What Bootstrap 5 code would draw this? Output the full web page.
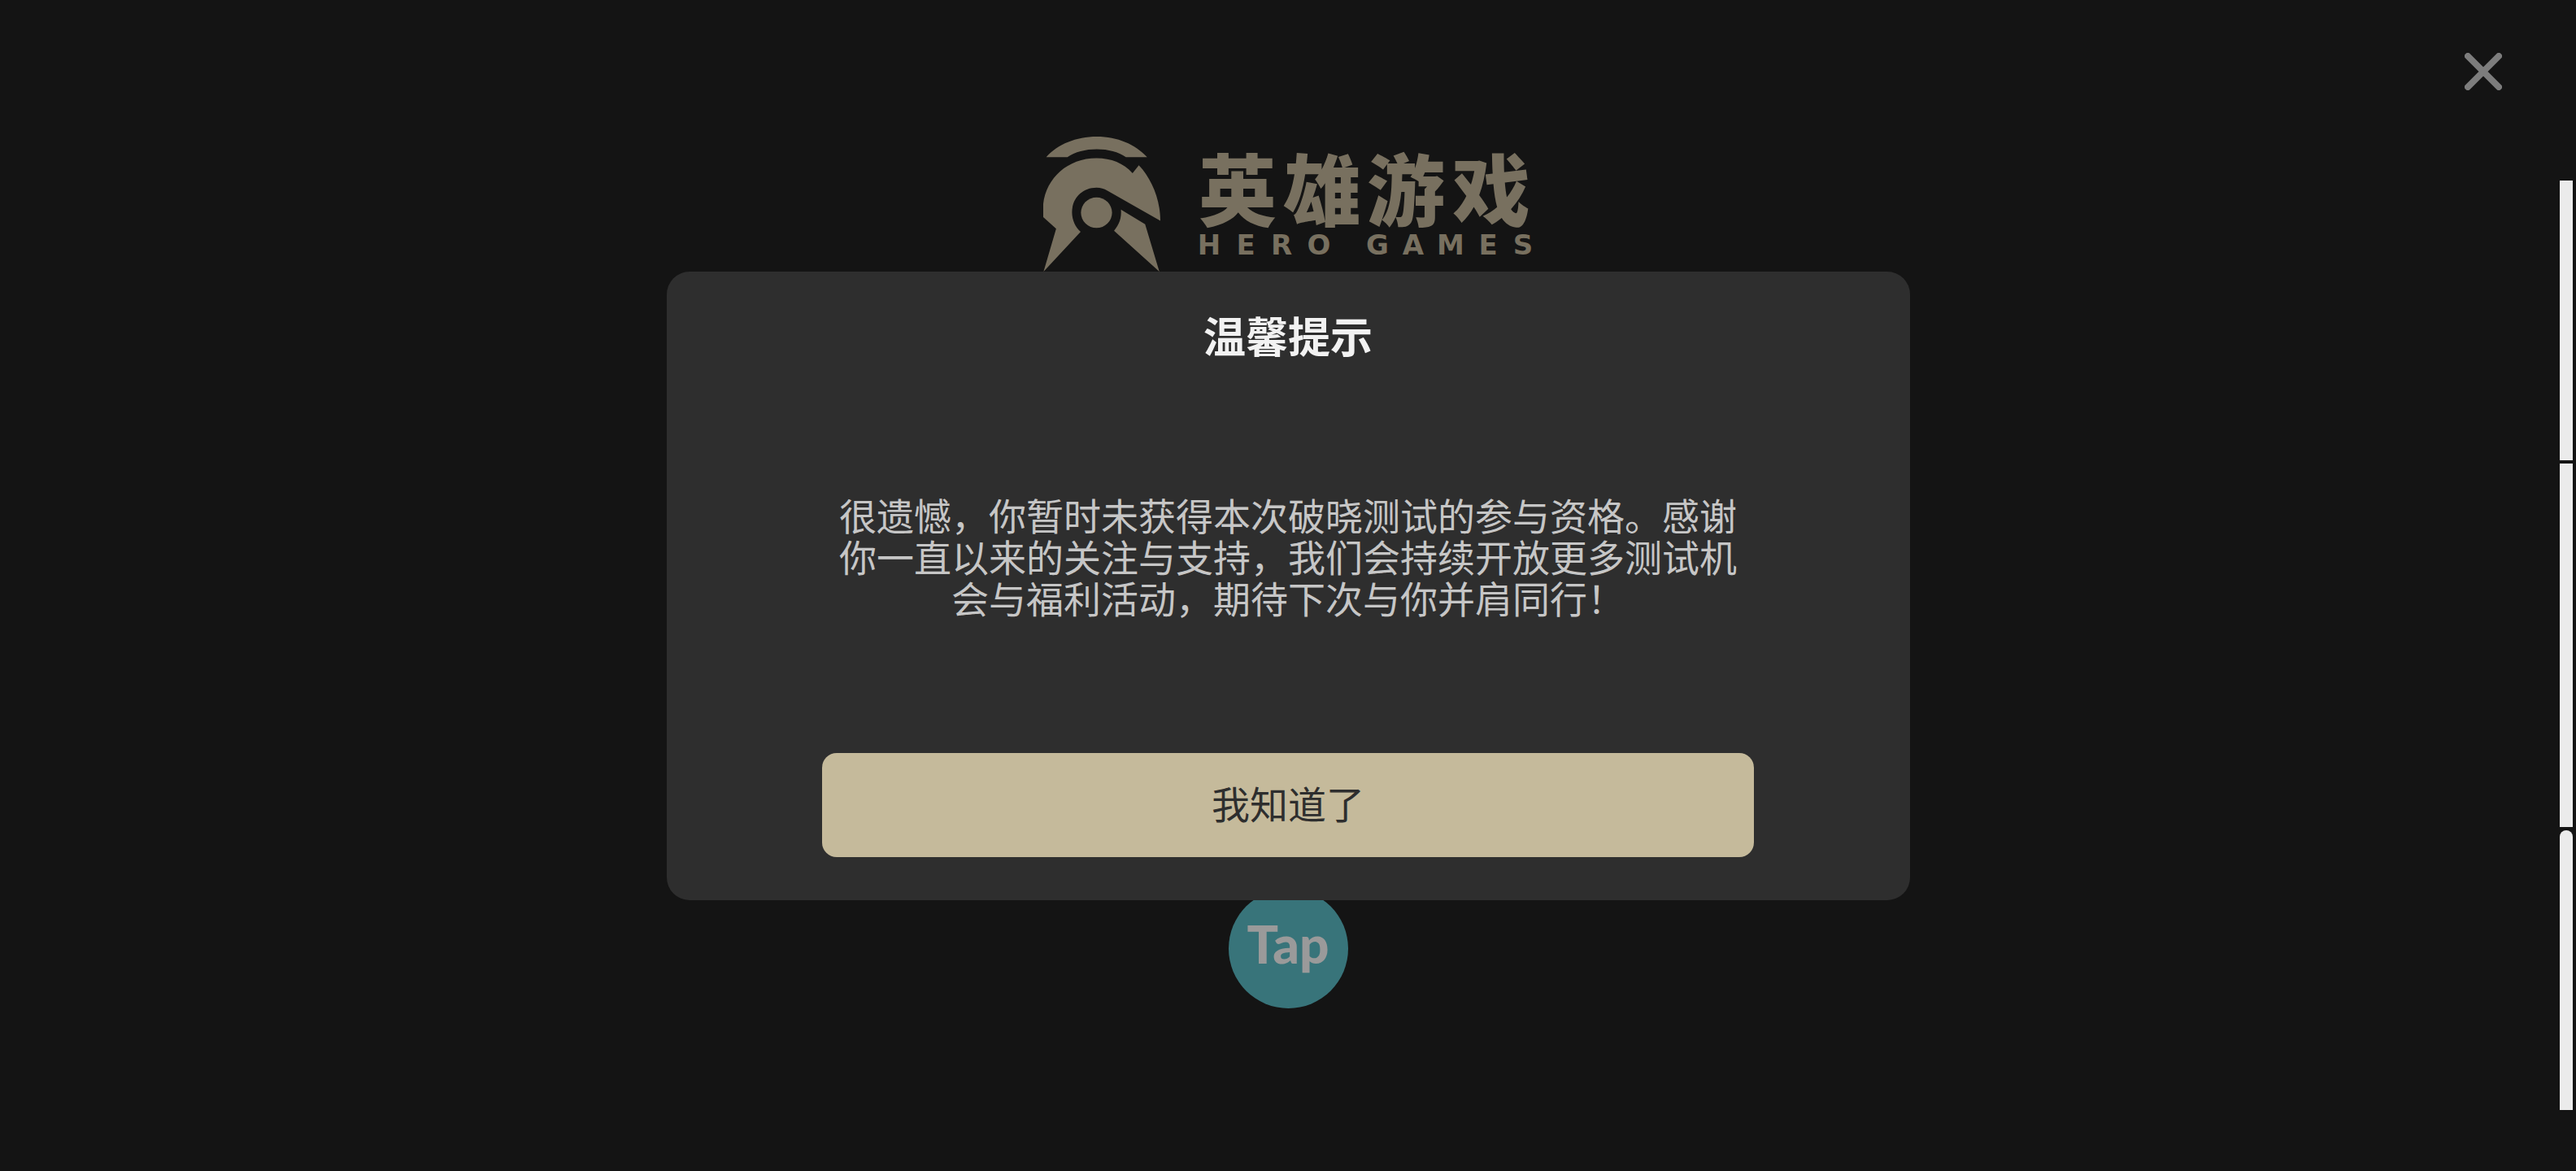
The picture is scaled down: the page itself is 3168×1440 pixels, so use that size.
<!DOCTYPE html>
<html lang="zh-CN">
<head>
<meta charset="utf-8">
<meta name="viewport" content="width=device-width, initial-scale=1">
<title>温馨提示</title>
<link href="https://cdn.jsdelivr.net/npm/bootstrap@5.3.0/dist/css/bootstrap.min.css" rel="stylesheet">
<style>
  body { background: #141414; font-family: "Noto Sans CJK SC", sans-serif; }
  .login-page { padding: 168px 24px 200px; }
  .brand-logo { width: 602px; max-width: 80%; fill: #78705f; overflow: visible; }
  .brand-zh { font: 900 96px "Noto Sans CJK SC", sans-serif; }
  .brand-en { font: 700 34px "DejaVu Sans", sans-serif; }
  .tap-login { width: 147px; border-radius: 50%; }
  .tap-login text { font: 900 64px Lato, sans-serif; }
  .page-close { top: 65px; right: 91px; width: 46px; height: 46px; }
  .notice-layer { z-index: 10; pointer-events: none; }
  .notice-box { width: 1529px; max-width: 94%; padding: 48px 24px 53px; background: #2e2e2e; border-radius: 28px; pointer-events: auto; }
  .notice-inner { width: 1146px; max-width: 100%; }
  .notice-title { font-size: 52px; line-height: 60px; color: #f2f2f2; }
  .notice-text { margin: 165px 0 166px; font-size: 46px; line-height: 51px; color: #c6c6c6; }
  .notice-ok, .notice-ok:hover { height: 128px; padding: 4px 12px 10px; border: 0; border-radius: 18px; background: #c5ba9b; color: #2e2e2e; font-size: 47px; line-height: 60px; }
  .side-rail { top: 222px; bottom: 75px; right: 4px; width: 16px; gap: 4px; }
  .rail-part { flex: 344 1 0; background: #ebebeb; }
  .rail-mid { flex-grow: 447; }
  .rail-last { border-radius: 8px 8px 0 0; }
</style>
<script src="https://cdn.jsdelivr.net/npm/bootstrap@5.3.0/dist/js/bootstrap.bundle.min.js"></script>
</head>
<body>
<main class="login-page d-flex flex-column align-items-center justify-content-between min-vh-100">
  <svg class="brand-logo" viewBox="0 0 602 166" role="img" aria-label="英雄游戏 HERO GAMES">
    <!-- helmet -->
    <svg x="0" y="0" width="144" height="166" viewBox="56 53 354 495" preserveAspectRatio="none">
      <path d="M65 128C100 81 155 53 218 53S333 81 370 128H306C283 109 253 99 218 99S152 109 129 128Z"/>
      <path d="M56 348V300C65 205 130 132 217 132C262 132 298 150 326 187L345 158C383 206 410 283 410 362L250 251C239 244 230 240 217 240C173 240 143 280 143 330C143 359 153 384 169 402L57 548L95 391Z"/>
      <ellipse cx="217" cy="332" rx="47" ry="56"/>
      <path d="M291 321L364 374L407 548L270 398C286 375 293 352 291 321Z"/>
    </svg>
    <text class="brand-zh" x="191 295 398 503" y="102">英雄游戏</text>
    <text class="brand-en" text-anchor="middle" x="204 249 293 339 375 411 455 501 547 590" y="145">HERO GAMES</text>
  </svg>
  <button type="button" class="tap-login btn p-0 border-0" aria-label="Tap">
    <svg class="d-block w-100" viewBox="0 0 147 147">
      <circle cx="73.5" cy="73.5" r="73.5" fill="#38747a"/>
      <text x="73" y="92" text-anchor="middle" fill="#9a9a9a">Tap</text>
    </svg>
  </button>
</main>

<button type="button" class="page-close btn p-0 border-0 position-fixed d-flex" aria-label="关闭">
  <svg class="w-100 h-100" viewBox="0 0 46 46"><path d="M4 4L42 42M42 4L4 42" stroke="#7d7d7d" stroke-width="8" stroke-linecap="round"/></svg>
</button>

<div class="side-rail position-fixed d-flex flex-column" aria-hidden="true">
  <div class="rail-part"></div>
  <div class="rail-part rail-mid"></div>
  <div class="rail-part rail-last"></div>
</div>

<div class="notice-layer position-fixed top-0 start-0 w-100 h-100 d-flex align-items-center justify-content-center">
  <section class="notice-box d-flex justify-content-center" role="dialog" aria-labelledby="noticeTitle">
    <div class="notice-inner text-center">
      <h1 class="notice-title fw-bold m-0" id="noticeTitle">温馨提示</h1>
      <p class="notice-text">很遗憾，你暂时未获得本次破晓测试的参与资格。感谢你一直以来的关注与支持，我们会持续开放更多测试机会与福利活动，期待下次与你并肩同行！</p>
      <button type="button" class="notice-ok btn w-100">我知道了</button>
    </div>
  </section>
</div>
</body>
</html>
